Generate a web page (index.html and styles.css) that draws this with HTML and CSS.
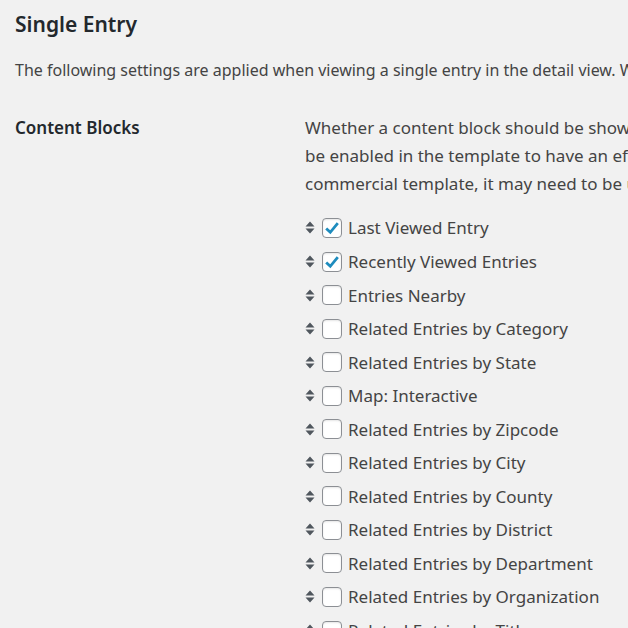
FILE: index.html
```html
<!DOCTYPE html>
<html>
<head>
<meta charset="utf-8">
<link rel="stylesheet" href="styles.css">
</head>
<body>
<div class="wrap">
  <h2 class="title">Single Entry</h2>
  <p class="intro">The following settings are applied when viewing a single entry in the detail view. When viewing a single entry the following settings apply.</p>
  <div class="form-row">
    <div class="label">Content Blocks</div>
    <div class="field">
      <p class="desc">
        <span class="line">Whether a content block should be shown or hidden. Drag and drop to change the order. NOTE: The content block must also</span>
        <span class="line">be enabled in the template to have an effect. All core templates support this feature. If you are using a</span>
        <span class="line">commercial template, it may need to be updated to support this feature.</span>
      </p>
      <ul class="blocks">
        <li class="block"><span class="handle"><svg viewBox="0 0 10 13" width="10" height="13"><path d="M5 0.5 L9.5 5.5 H0.5 Z M0.5 7.5 H9.5 L5 12.5 Z"/></svg></span><span class="cb checked"><svg viewBox="0 0 20 20" width="20" height="20"><path d="M4.2 10.4 L8.3 14.3 L15.8 5.2" /></svg></span><span class="text">Last Viewed Entry</span></li>
        <li class="block"><span class="handle"><svg viewBox="0 0 10 13" width="10" height="13"><path d="M5 0.5 L9.5 5.5 H0.5 Z M0.5 7.5 H9.5 L5 12.5 Z"/></svg></span><span class="cb checked"><svg viewBox="0 0 20 20" width="20" height="20"><path d="M4.2 10.4 L8.3 14.3 L15.8 5.2" /></svg></span><span class="text">Recently Viewed Entries</span></li>
        <li class="block"><span class="handle"><svg viewBox="0 0 10 13" width="10" height="13"><path d="M5 0.5 L9.5 5.5 H0.5 Z M0.5 7.5 H9.5 L5 12.5 Z"/></svg></span><span class="cb"></span><span class="text">Entries Nearby</span></li>
        <li class="block"><span class="handle"><svg viewBox="0 0 10 13" width="10" height="13"><path d="M5 0.5 L9.5 5.5 H0.5 Z M0.5 7.5 H9.5 L5 12.5 Z"/></svg></span><span class="cb"></span><span class="text">Related Entries by Category</span></li>
        <li class="block"><span class="handle"><svg viewBox="0 0 10 13" width="10" height="13"><path d="M5 0.5 L9.5 5.5 H0.5 Z M0.5 7.5 H9.5 L5 12.5 Z"/></svg></span><span class="cb"></span><span class="text">Related Entries by State</span></li>
        <li class="block"><span class="handle"><svg viewBox="0 0 10 13" width="10" height="13"><path d="M5 0.5 L9.5 5.5 H0.5 Z M0.5 7.5 H9.5 L5 12.5 Z"/></svg></span><span class="cb"></span><span class="text">Map: Interactive</span></li>
        <li class="block"><span class="handle"><svg viewBox="0 0 10 13" width="10" height="13"><path d="M5 0.5 L9.5 5.5 H0.5 Z M0.5 7.5 H9.5 L5 12.5 Z"/></svg></span><span class="cb"></span><span class="text">Related Entries by Zipcode</span></li>
        <li class="block"><span class="handle"><svg viewBox="0 0 10 13" width="10" height="13"><path d="M5 0.5 L9.5 5.5 H0.5 Z M0.5 7.5 H9.5 L5 12.5 Z"/></svg></span><span class="cb"></span><span class="text">Related Entries by City</span></li>
        <li class="block"><span class="handle"><svg viewBox="0 0 10 13" width="10" height="13"><path d="M5 0.5 L9.5 5.5 H0.5 Z M0.5 7.5 H9.5 L5 12.5 Z"/></svg></span><span class="cb"></span><span class="text">Related Entries by County</span></li>
        <li class="block"><span class="handle"><svg viewBox="0 0 10 13" width="10" height="13"><path d="M5 0.5 L9.5 5.5 H0.5 Z M0.5 7.5 H9.5 L5 12.5 Z"/></svg></span><span class="cb"></span><span class="text">Related Entries by District</span></li>
        <li class="block"><span class="handle"><svg viewBox="0 0 10 13" width="10" height="13"><path d="M5 0.5 L9.5 5.5 H0.5 Z M0.5 7.5 H9.5 L5 12.5 Z"/></svg></span><span class="cb"></span><span class="text">Related Entries by Department</span></li>
        <li class="block"><span class="handle"><svg viewBox="0 0 10 13" width="10" height="13"><path d="M5 0.5 L9.5 5.5 H0.5 Z M0.5 7.5 H9.5 L5 12.5 Z"/></svg></span><span class="cb"></span><span class="text">Related Entries by Organization</span></li>
        <li class="block"><span class="handle"><svg viewBox="0 0 10 13" width="10" height="13"><path d="M5 0.5 L9.5 5.5 H0.5 Z M0.5 7.5 H9.5 L5 12.5 Z"/></svg></span><span class="cb"></span><span class="text">Related Entries by Title</span></li>
      </ul>
    </div>
  </div>
</div>
</body>
</html>
```
FILE: styles.css
```css
html, body {
  margin: 0;
  padding: 0;
  background: #f1f1f1;
  overflow: hidden;
  width: 628px;
  height: 628px;
}
body {
  font-family: "Noto Sans", "Open Sans", sans-serif;
  color: #444;
  font-size: 17px;
}
.wrap {
  padding: 10px 0 0 15px;
  white-space: nowrap;
}
.title {
  margin: 0;
  font-size: 21px;
  font-weight: 600;
  line-height: 28px;
  color: #23282d;
}
.intro {
  margin: 21px 0 0 0;
  line-height: 22px;
  font-size: 16px;
}
.form-row {
  display: grid;
  grid-template-columns: 290px 1fr;
  margin-top: 36px;
}
.label {
  font-weight: 600;
  color: #23282d;
  line-height: 22px;
}
.desc {
  margin: 0;
  line-height: 28px;
  margin-top: -3px;
}
.line {
  display: block;
}
.blocks {
  list-style: none;
  margin: 13.2px 0 0 0;
  padding: 0;
}
.block {
  display: flex;
  align-items: center;
  height: 33.55px;
}
.handle {
  display: flex;
  width: 10px;
  margin-right: 7px;
}
.handle svg {
  fill: #50575e;
}
.cb {
  box-sizing: border-box;
  width: 20px;
  height: 20px;
  border: 1px solid #8c8f94;
  border-radius: 4px;
  background: #fff;
  box-shadow: inset 0 1px 2px rgba(0,0,0,0.1);
  margin-right: 6px;
  position: relative;
}
.cb svg {
  position: absolute;
  left: -1px;
  top: -1px;
  fill: none;
  stroke: #1e8cbe;
  stroke-width: 2.8;
}
.text {
  color: #444;
}
```
